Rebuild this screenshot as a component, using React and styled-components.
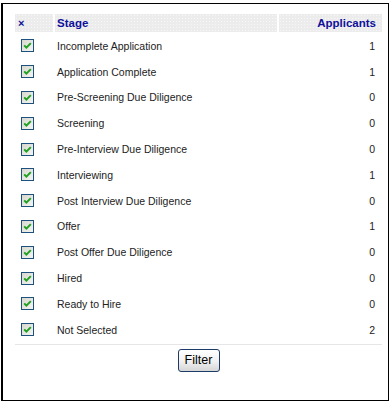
import React from 'react';
import styled, { createGlobalStyle } from 'styled-components';

const stages = [
  { name: 'Incomplete Application', count: 1 },
  { name: 'Application Complete', count: 1 },
  { name: 'Pre-Screening Due Diligence', count: 0 },
  { name: 'Screening', count: 0 },
  { name: 'Pre-Interview Due Diligence', count: 0 },
  { name: 'Interviewing', count: 1 },
  { name: 'Post Interview Due Diligence', count: 0 },
  { name: 'Offer', count: 1 },
  { name: 'Post Offer Due Diligence', count: 0 },
  { name: 'Hired', count: 0 },
  { name: 'Ready to Hire', count: 0 },
  { name: 'Not Selected', count: 2 },
];

const CheckBox = () => (
  <Box>
    <svg width="9" height="9" viewBox="0 0 9 9">
      <path d="M1.2 4.4 L3.4 6.6 L7.8 2.1" fill="none" stroke="#21a121" strokeWidth="2" />
    </svg>
  </Box>
);

const App = () => {
  return (
    <>
      <GlobalStyle />
      <Panel>
        <StageTable>
          <colgroup>
            <col style={{ width: 38 }} />
            <col style={{ width: 222 }} />
            <col style={{ width: 103 }} />
          </colgroup>
          <thead>
            <tr>
              <HeadCell>
                <ClearMark>&times;</ClearMark>
              </HeadCell>
              <HeadCell>Stage</HeadCell>
              <HeadCell $right>Applicants</HeadCell>
            </tr>
          </thead>
          <tbody>
            {stages.map((stage) => (
              <tr key={stage.name}>
                <CheckCell>
                  <CheckBox />
                </CheckCell>
                <Cell>{stage.name}</Cell>
                <Cell $right>{stage.count}</Cell>
              </tr>
            ))}
          </tbody>
          <tfoot>
            <tr>
              <FootCell colSpan={3}>
                <FilterButton type="button">Filter</FilterButton>
              </FootCell>
            </tr>
          </tfoot>
        </StageTable>
      </Panel>
    </>
  );
};

const GlobalStyle = createGlobalStyle`
  body {
    margin: 0;
    background: #fff;
    font-family: "Liberation Sans", Arial, sans-serif;
  }
`;

const Panel = styled.div`
  box-sizing: border-box;
  width: 388px;
  height: 398px;
  margin: 3px 0 0 1px;
  padding: 8px 0 0 10px;
  border: 1px solid #000;
  border-left-width: 2px;
  background: #fff;
`;

const StageTable = styled.table`
  width: 371px;
  table-layout: fixed;
  border-collapse: separate;
  border-spacing: 2px;
`;

const HeadCell = styled.th`
  height: 18px;
  padding: 0 ${(p) => (p.$right ? '6px' : '2px')} 0 2px;
  text-align: ${(p) => (p.$right ? 'right' : 'left')};
  font-size: 11.5px;
  font-weight: bold;
  color: #10109a;
  background-color: #ececec;
  background-image: radial-gradient(#f7f7f7 0.6px, transparent 0.7px);
  background-size: 3px 3px;
`;

const ClearMark = styled.span`
  display: inline-block;
  margin-left: 1px;
  font-size: 11px;
  color: #10109a;
`;

const Cell = styled.td`
  height: 23.8px;
  padding: 0 ${(p) => (p.$right ? '7px' : '2px')} 0 2px;
  text-align: ${(p) => (p.$right ? 'right' : 'left')};
  font-size: 10.5px;
  color: #222;
  white-space: nowrap;
`;

const CheckCell = styled.td`
  height: 23.8px;
  padding: 0 0 0 6px;
  vertical-align: middle;
`;

const Box = styled.span`
  box-sizing: border-box;
  display: flex;
  align-items: center;
  justify-content: center;
  width: 13px;
  height: 13px;
  border: 1px solid #1c5180;
  background: linear-gradient(135deg, #d8d8d0 0%, #f4f4f2 100%);
`;

const FootCell = styled.td`
  padding: 4px 0 0;
  border-top: 1px solid #e6e6e6;
  text-align: center;
`;

const FilterButton = styled.button`
  box-sizing: border-box;
  width: 42px;
  height: 23px;
  padding: 0;
  border: 1px solid #1c3b66;
  border-radius: 3px;
  background: linear-gradient(#ffffff 0%, #f0f0f0 55%, #d6d6d6 100%);
  font-family: "Liberation Sans", Arial, sans-serif;
  font-size: 12.5px;
  color: #000;
  cursor: pointer;
`;

export default App;
